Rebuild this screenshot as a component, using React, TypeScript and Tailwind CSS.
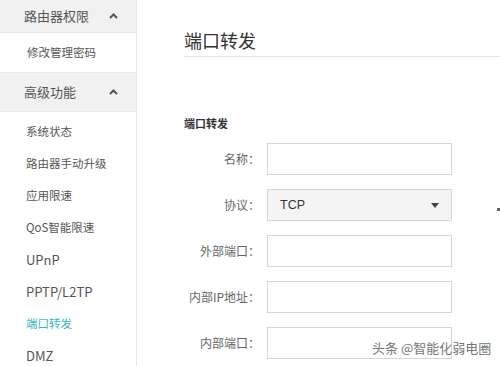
const font = { fontFamily: '"Noto Sans CJK SC", "Noto Sans", sans-serif' };

function ChevronUp() {
  return (
    <svg width="9" height="6" viewBox="0 0 9 6" className="text-[#555]">
      <polyline points="1,5 4.5,1.5 8,5" fill="none" stroke="currentColor" strokeWidth="2" />
    </svg>
  );
}

const subItems = ['系统状态', '路由器手动升级', '应用限速', 'QoS智能限速', 'UPnP', 'PPTP/L2TP', '端口转发', 'DMZ'];

function Field({ label, children }: { label: string; children?: React.ReactNode }) {
  return (
    <div className="flex items-center h-[32px] shrink-0">
      <div className="w-[77px] text-right text-[12px] text-[#666] pr-[1px]">{label}</div>
      <div className="ml-[6px] w-[185px] h-[32px]">
        {children ?? <div className="w-full h-full border border-[#d6d6d6] bg-white" />}
      </div>
    </div>
  );
}

export default function App() {
  return (
    <div className="w-[500px] h-[366px] bg-white flex overflow-hidden relative" style={font}>
      {/* Sidebar */}
      <div className="w-[137px] shrink-0 border-r border-[#e4e4e4] flex flex-col">
        <div className="h-[33px] shrink-0 bg-[#f1f1f1] flex items-center justify-between pl-[24px] pr-[18px] border-b border-[#e8e8e8]">
          <span className="text-[13px] text-[#555]">路由器权限</span>
          <ChevronUp />
        </div>
        <div className="h-[39px] shrink-0 flex items-center pl-[27px] text-[11.5px] text-[#555]">修改管理密码</div>
        <div className="h-[40px] shrink-0 bg-[#f1f1f1] flex items-center justify-between pl-[24px] pr-[18px] border-y border-[#e8e8e8]">
          <span className="text-[13px] text-[#555]">高级功能</span>
          <ChevronUp />
        </div>
        <div className="pt-[4px] flex flex-col shrink-0">
          {subItems.map((s) => (
            <div
              key={s}
              className={`h-[32px] shrink-0 flex items-center pl-[26px] ${
                s === '端口转发' ? 'text-[11.5px] text-[#37b8c4]' : s.match(/^[A-Z]/) && !s.startsWith('QoS') ? 'text-[13px] text-[#555]' : 'text-[11.5px] text-[#555]'
              }`}
            >
              {s}
            </div>
          ))}
        </div>
      </div>

      {/* Main */}
      <div className="flex-1 pl-[47px] flex flex-col">
        <div className="pt-[28px] pb-[4px] border-b border-[#e6e6e6] text-[18px] leading-[24px] text-[#333]">端口转发</div>
        <div className="mt-[58px] text-[11px] leading-[16px] font-bold text-[#333]">端口转发</div>
        <div className="mt-[12px] flex flex-col gap-[14px]">
          <Field label="名称：" />
          <Field label="协议：">
            <div className="w-full h-full border border-[#d6d6d6] bg-[#f4f4f4] flex items-center justify-between pl-[12px] pr-[12px]">
              <span className="text-[12.5px] text-[#333]" style={{ fontFamily: '"Liberation Sans", Arial, sans-serif' }}>TCP</span>
              <svg width="8" height="5" viewBox="0 0 8 5">
                <polygon points="0,0 8,0 4,5" fill="#444" />
              </svg>
            </div>
          </Field>
          <Field label="外部端口：" />
          <Field label="内部IP地址：" />
          <Field label="内部端口：" />
        </div>
      </div>

      {/* edge mark */}
      <div className="absolute left-[497px] top-[208px] w-[3px] h-[3px] bg-[#666]" />

      {/* watermark */}
      <div
        className="absolute left-[372px] top-[339px] text-[13px] leading-[18px] text-[#777] whitespace-nowrap"
        style={{ textShadow: '0 0 2px #fff, 0 0 2px #fff' }}
      >
        头条 @智能化弱电圈
      </div>
    </div>
  );
}
